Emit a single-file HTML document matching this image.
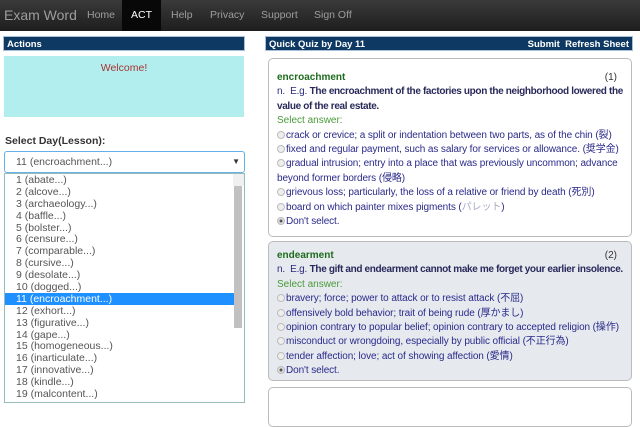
<!DOCTYPE html>
<html><head><meta charset="utf-8"><style>
*{box-sizing:border-box;margin:0;padding:0}
body{width:640px;height:400px;overflow:hidden;background:#fff;font-family:"Liberation Sans","Noto Sans CJK JP",sans-serif;font-size:11px;color:#333;position:relative}
.nav{position:absolute;left:0;top:0;width:640px;height:31px;background:linear-gradient(#3a3a3a,#1e1e1e);}
.nav span{position:absolute;top:9px;color:#9d9d9d;font-size:10.5px}
.nav .brand{font-size:14px;left:4px;top:7px}
.nav .act{position:absolute;left:122px;top:0;width:39px;height:31px;background:#080808;color:#fff;padding:9px 0 0 9px}
.hdr{position:absolute;height:15px;background:#0e3963;color:#fff;font-weight:bold;font-size:9.5px;padding:2px 3px;border:1px solid #a9c0d8}
.welcome{position:absolute;left:4px;top:56px;width:240px;height:61px;background:#b2eeee;color:#a33;text-align:center;padding-top:6px;font-size:10.5px}
.lbl{position:absolute;left:5px;top:135px;font-weight:bold;font-size:10.5px;color:#333}
.sel{position:absolute;left:4px;top:151px;width:241px;height:22px;border:1px solid #66afe9;border-radius:3px;padding:4px 0 0 11px;color:#555;font-size:10.5px}
.sel i{position:absolute;right:4px;top:5px;font-style:normal;font-size:8px;color:#333}
.list{position:absolute;left:4px;top:173px;width:241px;height:230px;border:1px solid #9bb;background:#fff;color:#555}
.list div{height:11.9px;line-height:12px;padding-left:11px;font-size:10.5px}
.list .on{background:#1e90ff;color:#fff;margin-right:10px;padding-left:11px}
.sb{position:absolute;right:0;top:0;width:10px;height:228px;background:#f0f0f0}
.sb b{position:absolute;left:1px;top:12px;width:8px;height:142px;background:#c1c1c1}
.card{position:absolute;left:268px;width:364px;border:1px solid #bbb;border-radius:5px;padding:9px 8px;line-height:14.4px;font-size:10px;overflow:hidden}
.card div{white-space:nowrap}
.card div.wrap{white-space:normal}
.w{color:#1e6b1e;font-weight:bold}
.n{float:right;color:#333;margin-right:6px}
.d{color:#2a2a7a;letter-spacing:-0.2px}
.d b{color:#28285a;letter-spacing:-0.35px}
.sa{color:#4a9a3a}
.o{color:#2a2a8a;letter-spacing:-0.1px}
.r{display:inline-block;width:8px;height:8px;border:1px solid #bbb;border-radius:50%;background:#eee;margin-right:1px;vertical-align:-1px}
.r.c{background:radial-gradient(#555 30%,#ddd 40%)}
</style></head><body>
<div class="nav"><span class="brand">Exam Word</span><span style="left:87px">Home</span><span class="act">ACT</span><span style="left:171px">Help</span><span style="left:210px">Privacy</span><span style="left:261px">Support</span><span style="left:314px">Sign Off</span></div>
<div class="hdr" style="left:3px;top:36px;width:242px">Actions</div>
<div class="hdr" style="left:265px;top:36px;width:368px">Quick Quiz by Day 11<span style="position:absolute;right:3px;top:2px">Submit&nbsp; Refresh Sheet</span></div>
<div class="welcome">Welcome!</div>
<div class="lbl">Select Day(Lesson):</div>
<div class="sel">11 (encroachment...)<i>▼</i></div>
<div class="list"><div>1 (abate...)</div><div>2 (alcove...)</div><div>3 (archaeology...)</div><div>4 (baffle...)</div><div>5 (bolster...)</div><div>6 (censure...)</div><div>7 (comparable...)</div><div>8 (cursive...)</div><div>9 (desolate...)</div><div>10 (dogged...)</div><div class="on">11 (encroachment...)</div><div>12 (exhort...)</div><div>13 (figurative...)</div><div>14 (gape...)</div><div>15 (homogeneous...)</div><div>16 (inarticulate...)</div><div>17 (innovative...)</div><div>18 (kindle...)</div><div>19 (malcontent...)</div><div class="sb"><b></b></div></div>
<div class="card" style="top:58px;height:179px;padding-top:12px">
<div><span class="w">encroachment</span><span class="n">(1)</span></div>
<div class="d">n.&nbsp; E.g. <b>The encroachment of the factories upon the neighborhood lowered the<br>value of the real estate.</b></div>
<div class="sa">Select answer:</div>
<div class="o"><span class="r"></span>crack or crevice; a split or indentation between two parts, as of the chin (裂)</div>
<div class="o"><span class="r"></span>fixed and regular payment, such as salary for services or allowance. (奨学金)</div>
<div class="o"><span class="r"></span>gradual intrusion; entry into a place that was previously uncommon; advance<br>beyond former borders (侵略)</div>
<div class="o"><span class="r"></span>grievous loss; particularly, the loss of a relative or friend by death (死別)</div>
<div class="o"><span class="r"></span>board on which painter mixes pigments (<span style="color:#aac">パレット</span>)</div>
<div class="o"><span class="r c"></span>Don't select.</div>
</div>
<div class="card" style="top:241px;height:140px;background:#e6eaef;padding-top:7px">
<div><span class="w">endearment</span><span class="n">(2)</span></div>
<div class="d">n.&nbsp; E.g. <b>The gift and endearment cannot make me forget your earlier insolence.</b></div>
<div class="sa">Select answer:</div>
<div class="o"><span class="r"></span>bravery; force; power to attack or to resist attack (不屈)</div>
<div class="o"><span class="r"></span>offensively bold behavior; trait of being rude (厚かまし)</div>
<div class="o"><span class="r"></span>opinion contrary to popular belief; opinion contrary to accepted religion (操作)</div>
<div class="o"><span class="r"></span>misconduct or wrongdoing, especially by public official (不正行為)</div>
<div class="o"><span class="r"></span>tender affection; love; act of showing affection (愛情)</div>
<div class="o"><span class="r c"></span>Don't select.</div>
</div>
<div class="card" style="top:387px;height:40px"></div>
</body></html>
